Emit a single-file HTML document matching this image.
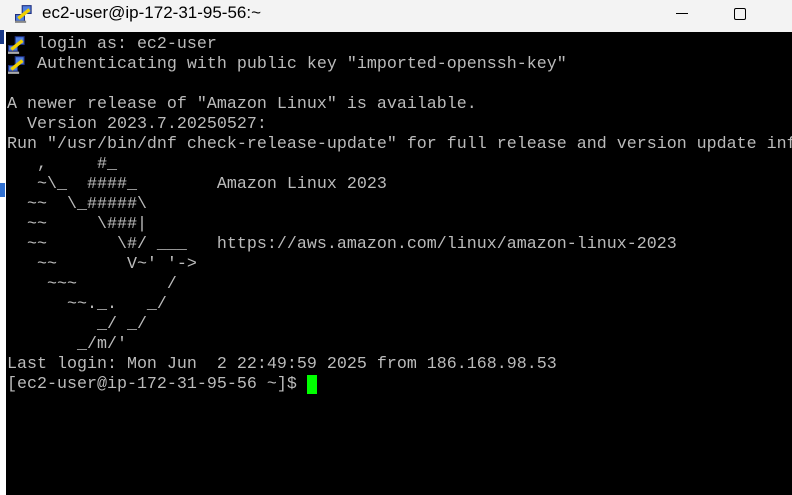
<!DOCTYPE html>
<html><head><meta charset="utf-8"><style>
*{margin:0;padding:0}
body{width:792px;height:495px;overflow:hidden;background:#fff;position:relative;font-family:"Liberation Sans",sans-serif}
#title{position:absolute;left:0;top:0;width:792px;height:32px;background:#f3f3f3}
#title .t{position:absolute;left:42px;top:3px;font-size:17px;color:#000}
#term{position:absolute;left:6px;top:32px;width:786px;height:463px;background:#000}
pre{position:absolute;left:7px;top:35px;font-family:"Liberation Mono",monospace;font-size:16.67px;line-height:20px;color:#bbb;white-space:pre}
.cur{position:absolute;left:307px;top:375px;width:10px;height:19px;background:#00ff00}
.ic{position:absolute;width:20px;height:18px}
</style></head><body>
<div id="title">
<svg class="ic" style="left:15px;top:5px" viewBox="0 0 18 16"><rect x="6" y="0" width="9" height="8" fill="#203080"/><rect x="7" y="1" width="7" height="6" fill="#5080e0"/><rect x="0" y="8" width="9" height="7" fill="#203080"/><rect x="1" y="9" width="7" height="5" fill="#5080e0"/><path d="M3 12 L13 4" stroke="#f0d000" stroke-width="3"/><rect x="0" y="14" width="10" height="2" fill="#888"/></svg>
<div class="t">ec2-user@ip-172-31-95-56:~</div>
<div style="position:absolute;left:676px;top:13px;width:12px;height:1px;background:#000"></div>
<div style="position:absolute;left:734px;top:8px;width:10px;height:10px;border:1px solid #000;border-radius:2px"></div>
</div>
<div style="position:absolute;left:0;top:30px;width:4px;height:14px;background:#1a3a8a"></div>
<div style="position:absolute;left:0;top:183px;width:5px;height:14px;background:#3070d0"></div>
<div id="term"></div>
<svg class="ic" style="left:8px;top:36px" viewBox="0 0 18 16"><rect x="6" y="0" width="9" height="8" fill="#203080"/><rect x="7" y="1" width="7" height="6" fill="#5080e0"/><rect x="0" y="8" width="9" height="6" fill="#203080"/><rect x="1" y="9" width="7" height="4" fill="#5080e0"/><path d="M3 12 L13 4" stroke="#f0d000" stroke-width="3"/><rect x="0" y="14" width="10" height="2" fill="#aaa"/></svg>
<svg class="ic" style="left:8px;top:56px" viewBox="0 0 18 16"><rect x="6" y="0" width="9" height="8" fill="#203080"/><rect x="7" y="1" width="7" height="6" fill="#5080e0"/><rect x="0" y="8" width="9" height="6" fill="#203080"/><rect x="1" y="9" width="7" height="4" fill="#5080e0"/><path d="M3 12 L13 4" stroke="#f0d000" stroke-width="3"/><rect x="0" y="14" width="10" height="2" fill="#aaa"/></svg>
<pre>   login as: ec2-user
   Authenticating with public key "imported-openssh-key"

A newer release of "Amazon Linux" is available.
  Version 2023.7.20250527:
Run "/usr/bin/dnf check-release-update" for full release and version update info
   ,     #_
   ~\_  ####_        Amazon Linux 2023
  ~~  \_#####\
  ~~     \###|
  ~~       \#/ ___   https://aws.amazon.com/linux/amazon-linux-2023
   ~~       V~' '->
    ~~~         /
      ~~._.   _/
         _/ _/
       _/m/'
Last login: Mon Jun  2 22:49:59 2025 from 186.168.98.53
[ec2-user@ip-172-31-95-56 ~]$ </pre>
<div class="cur"></div>
</body></html>
